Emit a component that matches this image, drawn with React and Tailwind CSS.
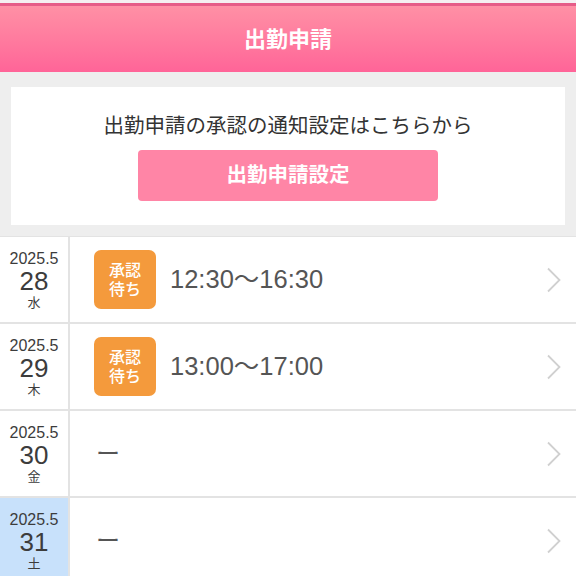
import React from 'react';

const rows = [
    { day: '28', wd: '水', time: '12:30〜16:30', pending: true },
    { day: '29', wd: '木', time: '13:00〜17:00', pending: true },
    { day: '30', wd: '金', time: null },
    { day: '31', wd: '土', time: null, today: true },
];

const Chevron = () => (
    <svg width="16" height="26" viewBox="0 0 16 26" fill="none">
        <path d="M2 1.5l11.5 11.5L2 24.5" stroke="#d0d0d0" strokeWidth="1.8" />
    </svg>
);

const Row = ({ day, wd, time, pending, today }) => (
    <div className="flex h-[87px] border-b-2 border-[#e3e3e3] bg-white">
        <div
            className={`w-[70px] shrink-0 flex flex-col items-center justify-center border-r-2 border-[#e3e3e3] text-[#3c3c3c] ${
                today ? 'bg-[#c8e1fb]' : 'bg-white'
            }`}
        >
            <span className="block text-[16px] leading-[17px]">2025.5</span>
            <span className="block text-[26px] leading-[28px]">{day}</span>
            <span className="block text-[13px] leading-[15px]">{wd}</span>
        </div>
        <div className="flex-1 flex items-center pl-[24px] pr-[14px]">
            {pending ? (
                <>
                    <div className="w-[62px] h-[59px] rounded-[7px] bg-[#f49a3c] text-white text-[16px] leading-[19px] font-medium flex flex-col items-center justify-center">
                        <span>承認</span>
                        <span>待ち</span>
                    </div>
                    <span className="ml-[14px] text-[25.5px] text-[#555]">{time}</span>
                </>
            ) : (
                <span className="ml-[2px] text-[24px] text-[#555]">ー</span>
            )}
            <div className="ml-auto">
                <Chevron />
            </div>
        </div>
    </div>
);

export default function App() {
    return (
        <div
            className="w-[576px] h-[576px] overflow-hidden bg-[#eeeeee]"
            style={{ fontFamily: '"Liberation Sans", "Noto Sans CJK JP", sans-serif' }}
        >
            <div className="h-[3px] bg-[#f5f0f2]" />
            <div className="h-[3px] bg-[#e65c88]" />
            <div className="h-[66px] bg-gradient-to-b from-[#ff90a5] to-[#ff6498] flex items-center justify-center">
                <span className="text-white text-[22px] font-bold">出勤申請</span>
            </div>
            <div className="px-[11px] pt-[15px] pb-[11px]">
                <div className="bg-white h-[138px] flex flex-col items-center pt-[24px]">
                    <p className="text-[20.5px] text-[#333] leading-[30px]">出勤申請の承認の通知設定はこちらから</p>
                    <button className="mt-[9px] w-[300px] h-[51px] rounded-[4px] bg-[#ff85a6] text-white text-[20.5px] font-bold">
                        出勤申請設定
                    </button>
                </div>
            </div>
            <div className="border-t border-[#e3e3e3]">
                {rows.map((r) => (
                    <Row key={r.day} {...r} />
                ))}
            </div>
        </div>
    );
}
